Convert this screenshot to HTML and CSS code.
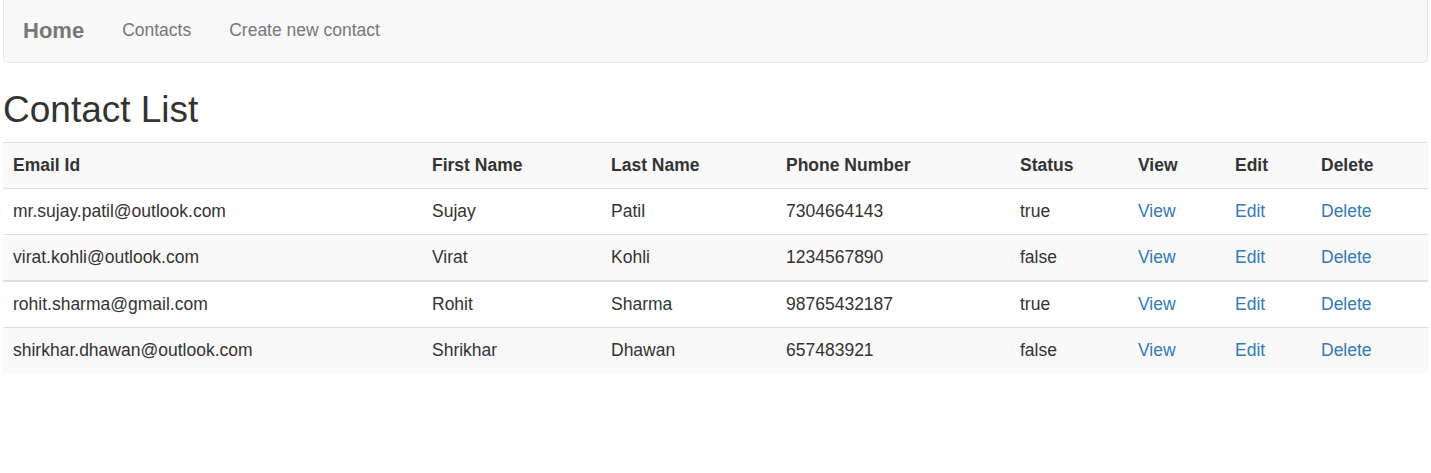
FILE: index.html
```html
<!DOCTYPE html>
<html>
<head>
<meta charset="utf-8">
<link rel="stylesheet" href="styles.css">
</head>
<body>
<div class="page">
  <nav class="navbar">
    <a class="brand" href="#">Home</a>
    <a class="nav-link" href="#">Contacts</a>
    <a class="nav-link" href="#">Create new contact</a>
  </nav>
  <h1 class="title">Contact List</h1>
  <table class="table">
    <colgroup>
      <col class="c1"><col class="c2"><col class="c3"><col class="c4"><col class="c5"><col class="c6"><col class="c7"><col class="c8">
    </colgroup>
    <thead>
      <tr class="gray">
        <th>Email Id</th><th>First Name</th><th>Last Name</th><th>Phone Number</th><th>Status</th><th>View</th><th>Edit</th><th>Delete</th>
      </tr>
    </thead>
    <tbody>
      <tr>
        <td>mr.sujay.patil@outlook.com</td><td>Sujay</td><td>Patil</td><td>7304664143</td><td>true</td><td><a href="#">View</a></td><td><a href="#">Edit</a></td><td><a href="#">Delete</a></td>
      </tr>
      <tr class="gray">
        <td>virat.kohli@outlook.com</td><td>Virat</td><td>Kohli</td><td>1234567890</td><td>false</td><td><a href="#">View</a></td><td><a href="#">Edit</a></td><td><a href="#">Delete</a></td>
      </tr>
    </tbody>
    <tbody class="next">
      <tr>
        <td>rohit.sharma@gmail.com</td><td>Rohit</td><td>Sharma</td><td>98765432187</td><td>true</td><td><a href="#">View</a></td><td><a href="#">Edit</a></td><td><a href="#">Delete</a></td>
      </tr>
      <tr class="gray">
        <td>shirkhar.dhawan@outlook.com</td><td>Shrikhar</td><td>Dhawan</td><td>657483921</td><td>false</td><td><a href="#">View</a></td><td><a href="#">Edit</a></td><td><a href="#">Delete</a></td>
      </tr>
    </tbody>
  </table>
</div>
</body>
</html>
```

FILE: styles.css
```css
html, body {
  margin: 0;
  padding: 0;
  background: #fff;
}
body {
  font-family: "Liberation Sans", Arial, Helvetica, sans-serif;
  font-size: 17.5px;
  line-height: 25px;
  color: #333;
}
.page {
  padding: 0 3px;
}
.navbar {
  display: flex;
  align-items: center;
  box-sizing: border-box;
  height: 63px;
  background: #f8f8f8;
  border: 1px solid #e7e7e7;
  border-top: none;
  border-radius: 0 0 5px 5px;
  padding: 0 0 2px 19px;
}
.navbar a {
  text-decoration: none;
  color: #777;
}
.brand {
  font-size: 22px;
  font-weight: bold;
  margin-right: 38px;
}
.nav-link {
  margin-right: 38px;
}
.title {
  font-size: 37px;
  font-weight: normal;
  line-height: 40px;
  margin: 27px 0 12px 0;
  color: #333;
}
.table {
  width: 100%;
  border-collapse: collapse;
  border-spacing: 0;
  border-top: 1px solid #ddd;
}
.c1 { width: 419px; }
.c2 { width: 179px; }
.c3 { width: 175px; }
.c4 { width: 234px; }
.c5 { width: 118px; }
.c6 { width: 97px; }
.c7 { width: 86px; }
.c8 { width: auto; }
.table th, .table td {
  text-align: left;
  padding: 10px;
  height: 25px;
  vertical-align: top;
  border-top: 1px solid #ddd;
}
.table th {
  font-weight: bold;
}
.table .next tr:first-child td {
  border-top: 2px solid #ddd;
}
.gray {
  background: #f9f9f9;
}
.table a {
  color: #337ab7;
  text-decoration: none;
}
```
